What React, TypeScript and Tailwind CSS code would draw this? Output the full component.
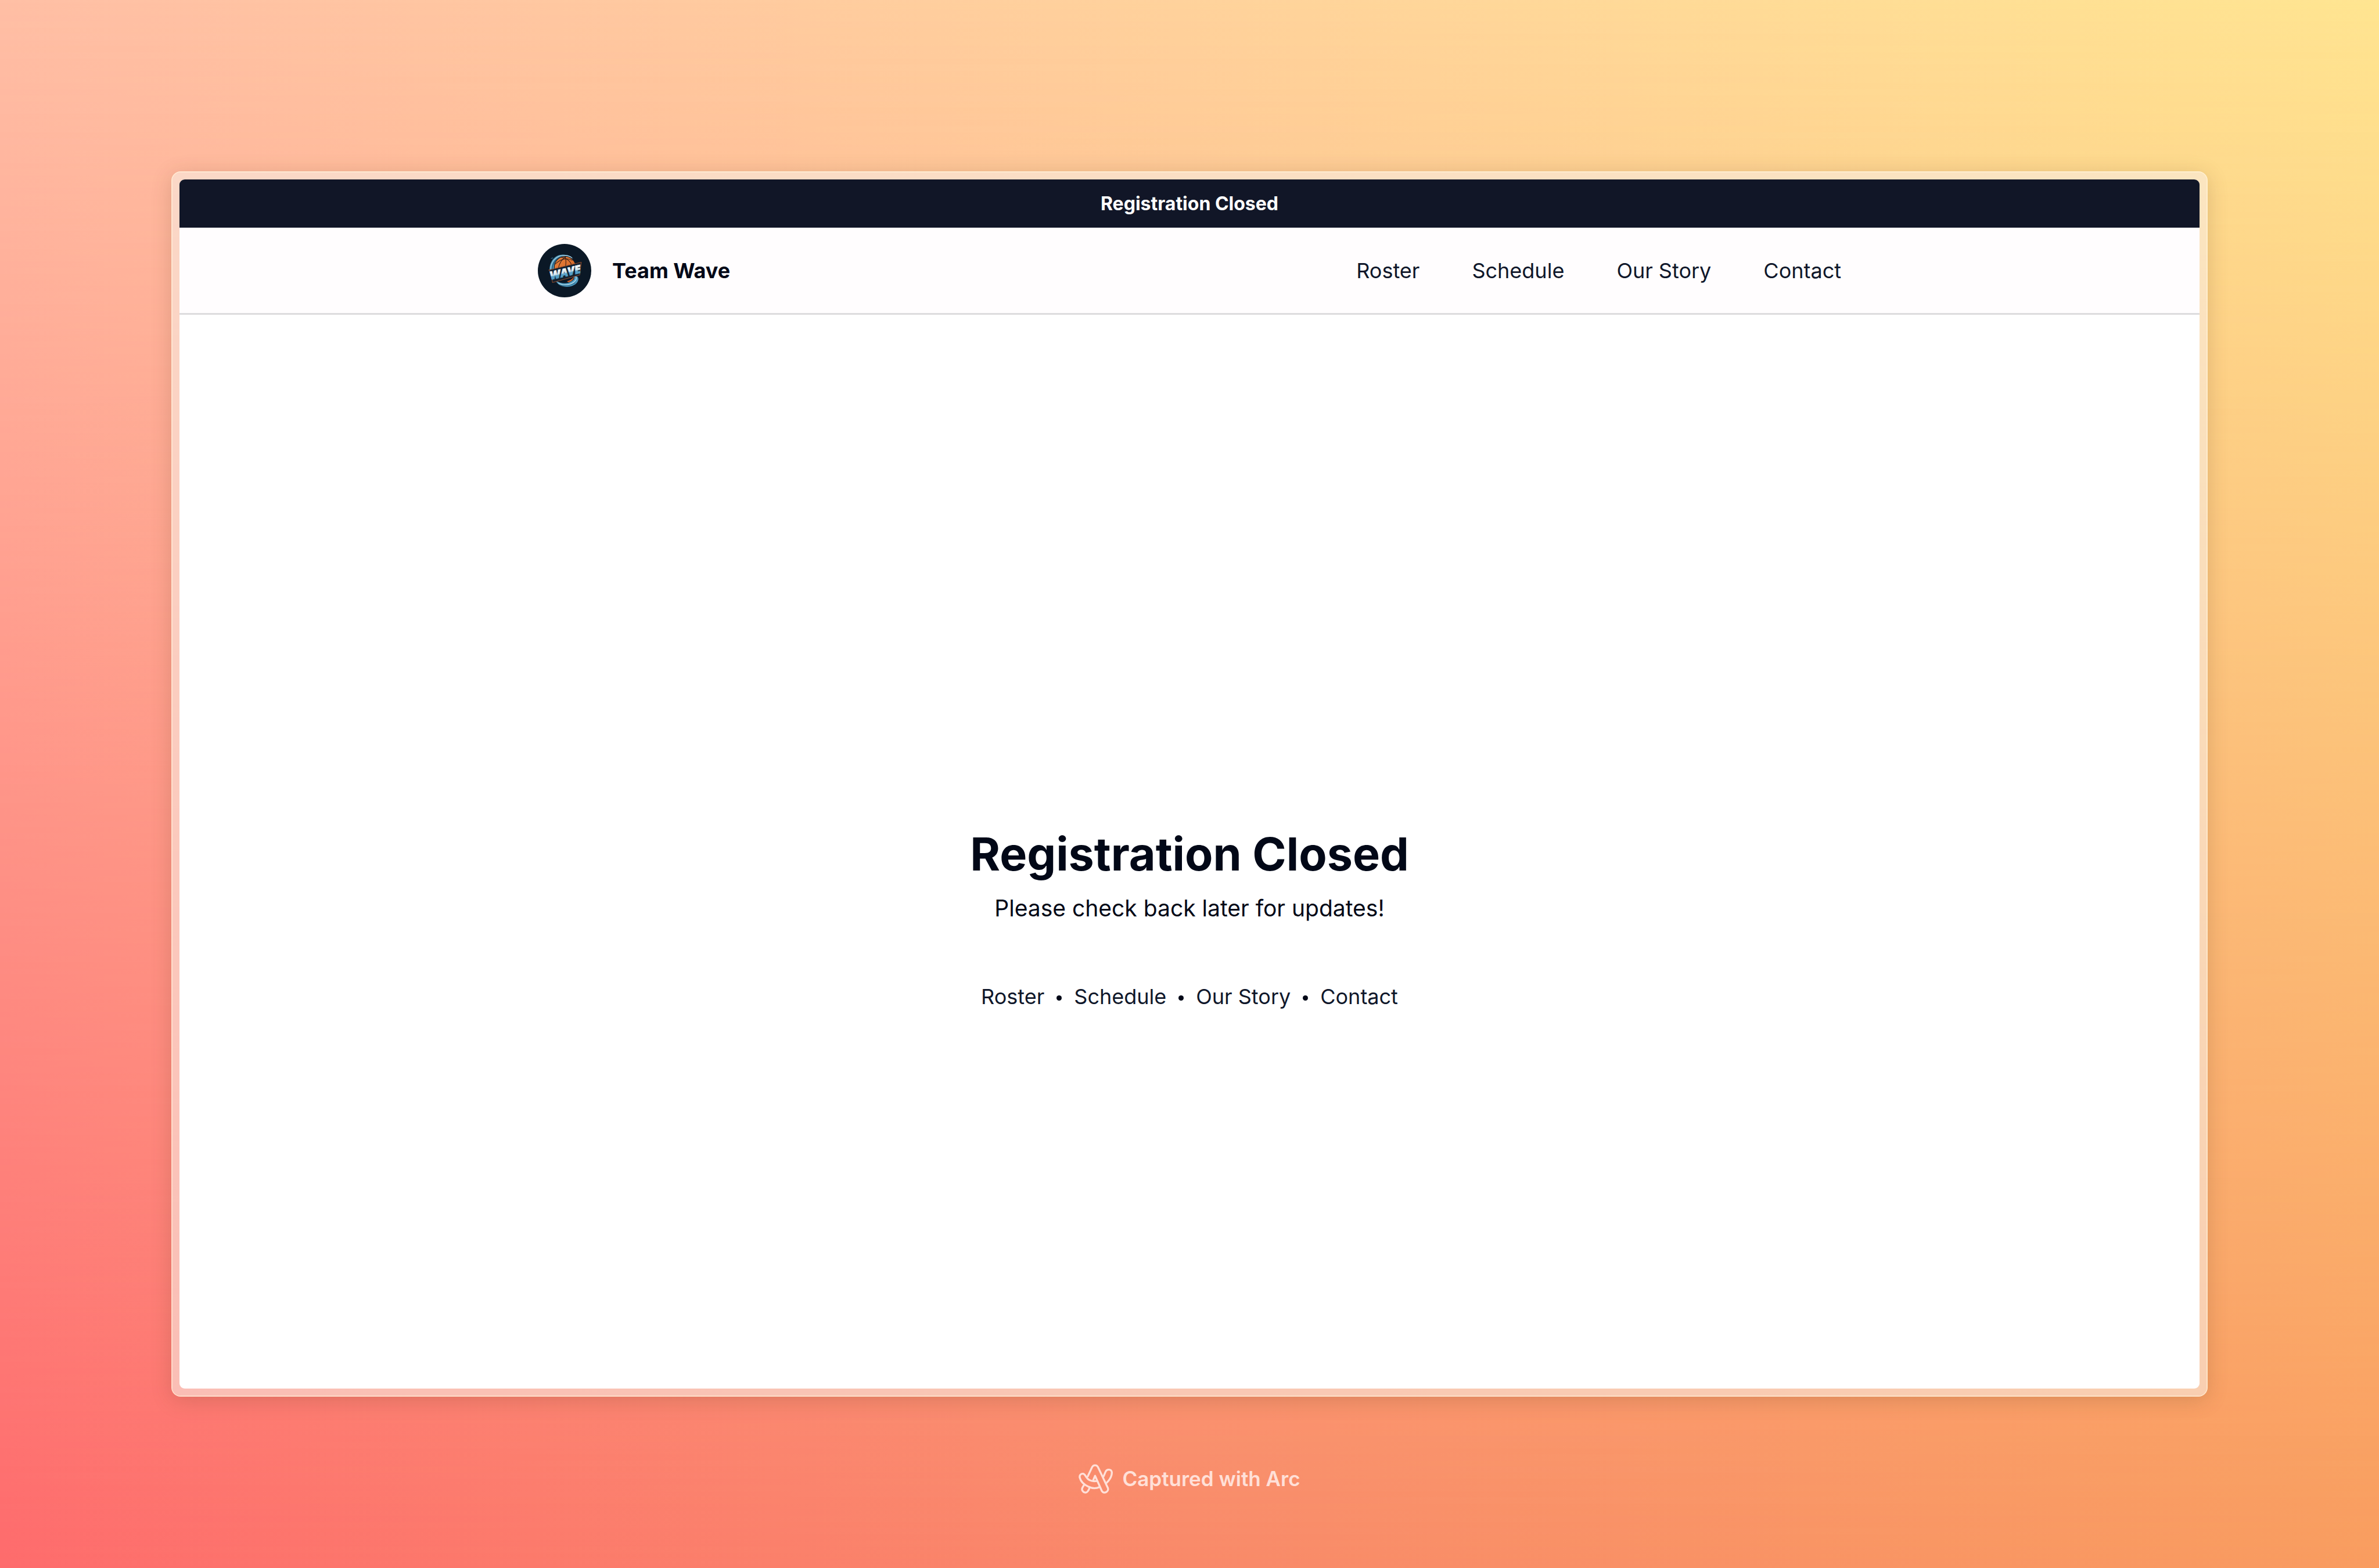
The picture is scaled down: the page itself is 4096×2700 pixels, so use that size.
const links = ["Roster", "Schedule", "Our Story", "Contact"];

function TeamLogo() {
  return (
    <svg viewBox="30 33 342 342" className="size-[92px] shrink-0" role="img" aria-label="Team Wave logo">
      <defs>
        <linearGradient id="waveText" x1="0" y1="0" x2="0" y2="1">
          <stop offset="0.3" stopColor="#f4f8fa" />
          <stop offset="0.52" stopColor="#d5e6ee" />
          <stop offset="0.6" stopColor="#5ba3c9" />
          <stop offset="1" stopColor="#3f8fbb" />
        </linearGradient>
        <linearGradient id="ball" x1="0" y1="0" x2="1" y2="1">
          <stop offset="0" stopColor="#e8823c" />
          <stop offset="1" stopColor="#cf5f22" />
        </linearGradient>
      </defs>
      <circle cx="201" cy="204" r="171" fill="#0b1826" />
      <path d="M106 210C100 150 138 100 192 102C222 103 244 114 256 130C226 108 186 106 160 132C142 150 136 176 138 204Z" fill="#4c92b5" />
      <path d="M112 196C112 148 146 108 196 106C220 105 240 114 250 124" fill="none" stroke="#a9d3e4" strokeWidth="4" />
      <path d="M122 194C124 152 150 122 184 114" fill="none" stroke="#1d4b68" strokeWidth="4" />
      <path d="M111 128l12-8 7 1-9 7z" fill="#2f6f93" />
      <circle cx="204" cy="182" r="69" fill="url(#ball)" stroke="#121b26" strokeWidth="4" />
      <g fill="none" stroke="#3a2018" strokeWidth="4">
        <path d="M140 164C170 132 214 118 252 138" />
        <path d="M160 192C168 156 188 126 212 114" />
        <path d="M178 118C212 122 240 142 248 174" />
        <path d="M206 180C212 156 212 136 204 114" />
      </g>
      <path d="M144 268C170 284 214 294 246 272C262 262 268 250 258 240C288 230 300 258 278 284C246 318 168 318 144 268Z" fill="#4c97bd" />
      <path d="M160 282C190 300 232 300 262 276C278 262 280 248 272 242" fill="none" stroke="#b5dcea" strokeWidth="5" />
      <path d="M172 297C204 307 240 300 270 282" fill="none" stroke="#1d5474" strokeWidth="3" />
      <path d="M216 272C234 268 252 258 262 244C258 262 244 274 226 278Z" fill="#d9662a" />
      <path d="M100 200L308 150L298 232L124 280L112 212Z" fill="#132130" stroke="#8a4a2c" strokeWidth="4" strokeLinejoin="round" />
      <text
        x="206"
        y="241"
        textAnchor="middle"
        transform="rotate(-13 205 215)"
        fill="url(#waveText)"
        stroke="url(#waveText)"
        strokeWidth="3"
        className="font-['Open_Sans'] text-[72px] font-extrabold italic"
      >
        WAVE
      </text>
    </svg>
  );
}

function ArcLogo() {
  return (
    <svg
      viewBox="84 93 214 184"
      className="h-[51px] w-[59px] shrink-0"
      fill="none"
      stroke="currentColor"
      strokeWidth="12"
      strokeLinejoin="round"
      strokeLinecap="round"
      aria-hidden="true"
    >
      <path d="M141 170L167 115C175 95 199 95 207 115L267 242C275 264 244 282 230 262L187 166L176 192" />
      <path d="M216 236C194 246 166 244 146 234C118 222 98 204 91 176C89 160 100 152 112 153C122 155 126 164 132 174C146 196 170 203 199 198" />
      <path d="M119 222L108 240C100 256 114 271 128 271C140 270 146 260 153 241" />
      <path d="M240 170L252 142C260 122 288 122 292 144C292 168 278 192 259 210" />
    </svg>
  );
}

export default function App() {
  return (
    <div className="relative isolate flex min-h-screen flex-col bg-linear-to-r from-[#ffbfa5] to-[#ffe591] px-[295px] pt-[295px] font-['Inter',sans-serif] text-[#020817]">
      <div className="absolute inset-0 -z-10 bg-linear-to-r from-[#fe6b6c] via-[#f98969] to-[#f99c5f] mask-t-from-0% mask-t-to-100%" />

      <div className="flex flex-1 flex-col rounded-[16px] border-2 border-[#fff4e0]/80 bg-[#f8ece2]/60 bg-clip-padding p-[12px] shadow-[0_6px_36px_rgba(90,60,30,0.2)]">
        <div className="flex flex-1 flex-col overflow-hidden rounded-[9px] bg-white">
          <div className="flex h-[83px] items-center justify-center bg-[#111627] text-[32px] font-bold text-white">
            Registration Closed
          </div>

          <header className="border-b-[3px] border-[#dddcde] bg-[#fffdfe] pt-[28px] pb-[27px]">
            <div className="mx-auto flex max-w-[2244px] items-center justify-between">
              <a href="#" className="flex items-center gap-[36px] text-[36px] font-bold">
                <TeamLogo />
                Team Wave
              </a>
              <nav className="flex gap-[90px] text-[36px] text-[#0f172a]">
                {links.map((link) => (
                  <a key={link} href="#">
                    {link}
                  </a>
                ))}
              </nav>
            </div>
          </header>

          <main className="flex flex-1 flex-col items-center justify-center pt-[232px]">
            <h1 className="text-[79px] leading-[96px] font-bold">Registration Closed</h1>
            <p className="mt-[16px] text-[39px] leading-[60px]">Please check back later for updates!</p>
            <nav className="mt-[94px] flex items-center gap-[21px] text-[36px] leading-[56px] text-[#0f172a]">
              {links.map((link, i) => (
                <div key={link} className="flex items-center gap-[21px]">
                  {i > 0 && <span className="mt-[5px] size-[9px] rounded-full bg-[#020817]" />}
                  <a href="#">{link}</a>
                </div>
              ))}
            </nav>
          </main>
        </div>
      </div>

      <footer className="flex h-[295px] items-center justify-center gap-[16px] pb-[12px] text-[35px] font-semibold text-[#ffe0d8]">
        <ArcLogo />
        Captured with Arc
      </footer>
    </div>
  );
}
